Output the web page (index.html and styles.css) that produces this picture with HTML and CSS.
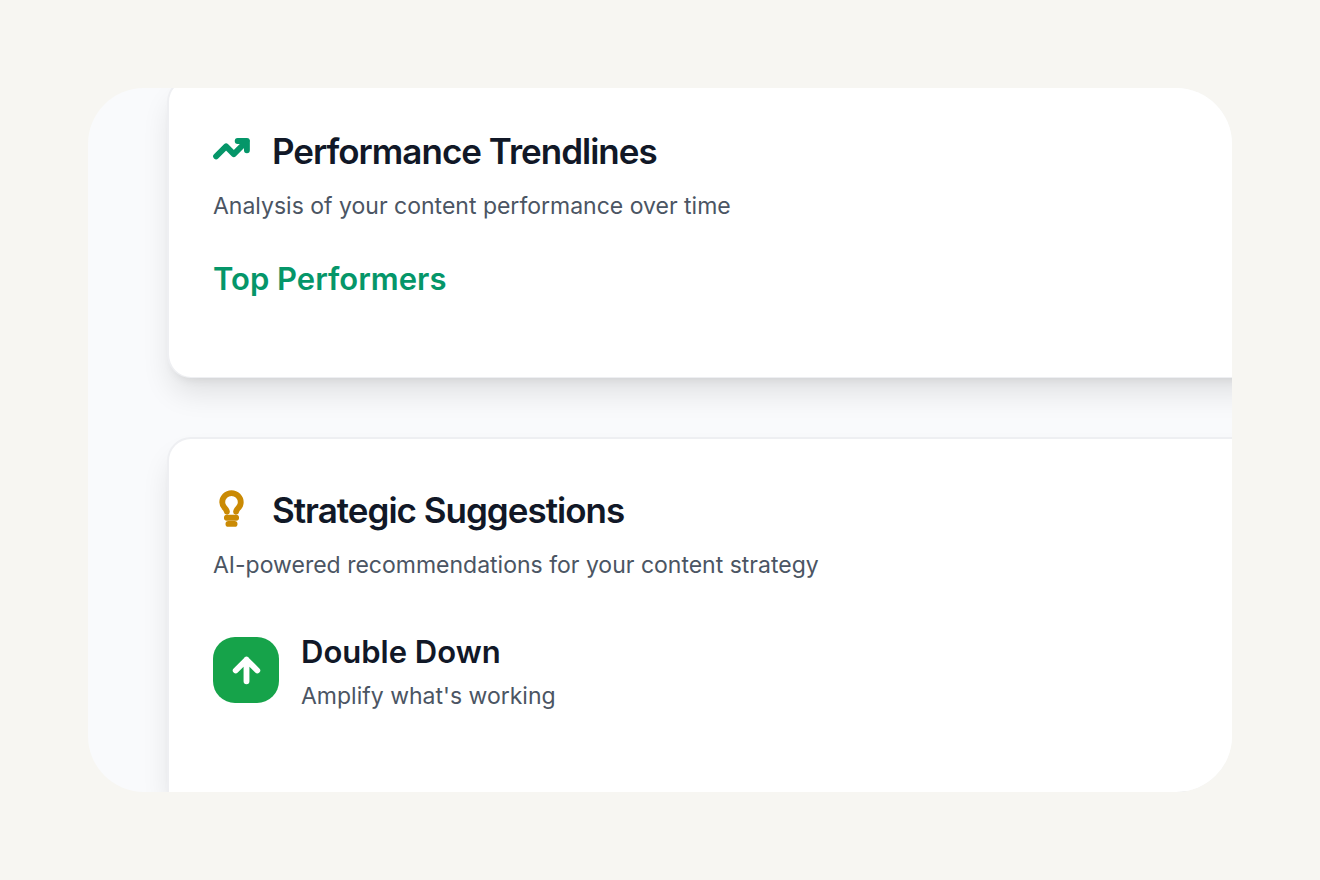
FILE: index.html
```html
<!DOCTYPE html>
<html lang="en">
<head>
<meta charset="utf-8">
<title>Content insights</title>
<link rel="stylesheet" href="styles.css">
</head>
<body>
<main class="frame">
  <section class="card card-trends">
    <header class="card-header">
      <svg class="icon trend-icon" viewBox="0 0 24 24" aria-hidden="true"><path d="M2 16.500 8.500 10l5 5L22 6.500M16 6.500h6v6"/></svg>
      <h2 class="card-title">Performance Trendlines</h2>
    </header>
    <p class="card-text">Analysis of your content performance over time</p>
    <h3 class="section-title">Top Performers</h3>
  </section>
  <section class="card card-suggestions">
    <header class="card-header">
      <svg class="icon bulb-icon" viewBox="0 0 24 24" aria-hidden="true"><path d="M15 14c.2-1 .7-1.700 1.500-2.500 1-.9 1.500-2.200 1.500-3.500A6 6 0 0 0 6 8c0 1 .2 2.200 1.500 3.500.7.7 1.300 1.500 1.500 2.500M9 18h6M10 22h4"/></svg>
      <h2 class="card-title">Strategic Suggestions</h2>
    </header>
    <p class="card-text">AI-powered recommendations for your content strategy</p>
    <div class="suggestion">
      <span class="badge"><svg class="icon" viewBox="0 0 24 24" aria-hidden="true"><path d="m5 12 7-7 7 7M12 19V5"/></svg></span>
      <div>
        <h3 class="suggestion-title">Double Down</h3>
        <p class="suggestion-text">Amplify what's working</p>
      </div>
    </div>
  </section>
</main>
</body>
</html>
```
FILE: styles.css
```css
* {
  box-sizing: border-box;
}

body {
  margin: 0;
  min-height: 100vh;
  padding: 88px;
  display: flex;
  background: #f7f6f2;
  font-family: Inter, "Liberation Sans", sans-serif;
  color: #111827;
}

h2, h3, p {
  margin: 0;
}

.frame {
  flex: 1;
  min-width: 0;
  display: flex;
  flex-direction: column;
  gap: 59px;
  padding-left: 79px;
  border-radius: 56px;
  background: #f9fafc;
  overflow: hidden;
}

.card {
  margin-right: -40px;
  padding: 51px 44px 74px;
  border: 2px solid #eeeff2;
  border-bottom-width: 1px;
  border-radius: 24px;
  background: #fff;
  box-shadow: 0 18px 30px -4px rgb(0 0 0 / 11%), 0 7px 11px -7px rgb(0 0 0 / 10%);
}

/* The first card runs past the top edge of the frame. */
.card-trends {
  margin-top: -10px;
}

.card-suggestions {
  flex: 1;
  border-bottom: 0;
  border-radius: 24px 24px 0 0;
}

.card-header {
  display: flex;
  align-items: flex-start;
  gap: 22px;
}

.icon {
  width: 37px;
  height: 37px;
  fill: none;
  stroke: currentColor;
  stroke-width: 3.8;
  stroke-linecap: round;
  stroke-linejoin: round;
  overflow: visible;
}

.trend-icon {
  color: #059669;
}

.bulb-icon {
  color: #ca8a04;
}

.card-title {
  font-size: 35px;
  line-height: 40px;
  font-weight: 600;
  letter-spacing: -1px;
}

.card-text, .suggestion-text {
  font-size: 23px;
  line-height: 36px;
  color: #4b5563;
}

.card-text {
  margin-top: 17px;
}

.section-title, .suggestion-title {
  font-size: 31px;
  font-weight: 600;
}

.section-title {
  margin-top: 31px;
  line-height: 48px;
  color: #059669;
}

.suggestion-title {
  line-height: 52px;
}

.suggestion {
  margin-top: 43px;
  display: flex;
  align-items: center;
  gap: 22px;
}

.badge {
  width: 66px;
  height: 66px;
  display: flex;
  align-items: center;
  justify-content: center;
  border-radius: 22px;
  background: #16a34a;
  color: #fff;
}
```
